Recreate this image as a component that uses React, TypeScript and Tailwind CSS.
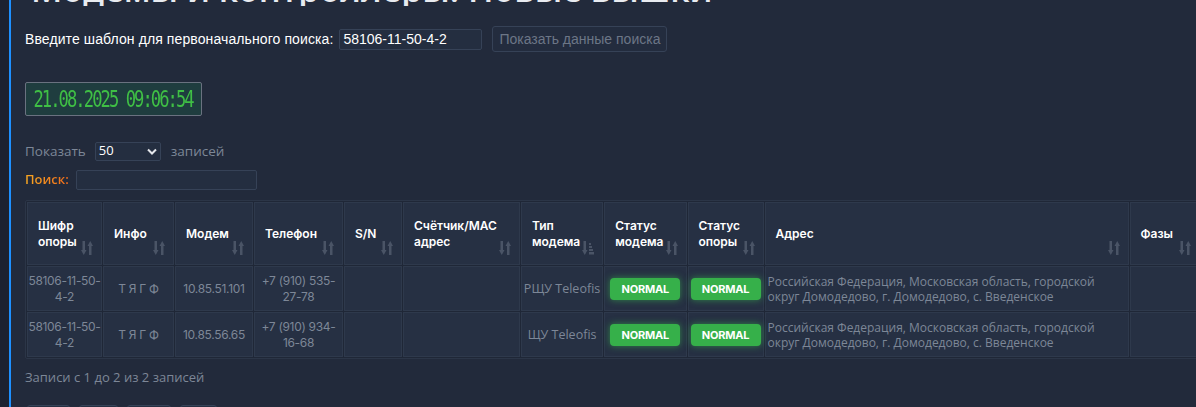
import React from 'react'

const SortIcon = ({active = false}: {active?: boolean}) => (
    <svg width="12" height="14" viewBox="0 0 12 14" className="absolute right-[8px] bottom-[9px]">
        {active ? (
            <g fill="#4a5466">
                <rect x="1.5" y="0" width="2.5" height="10" />
                <path d="M0 9 L2.75 14 L5.5 9 Z" />
                <rect x="7" y="2" width="2" height="2" />
                <rect x="7" y="5" width="3" height="2" />
                <rect x="7" y="8" width="4" height="2" />
                <rect x="7" y="11" width="5" height="2.5" />
            </g>
        ) : (
            <g fill="#4a5466">
                <rect x="1.5" y="0" width="2.5" height="10" />
                <path d="M0 9 L2.75 14 L5.5 9 Z" />
                <rect x="8" y="4" width="2.5" height="10" />
                <path d="M6.5 5 L9.25 0 L12 5 Z" />
            </g>
        )}
    </svg>
)

const headers = [
    {t: 'Шифр опоры', w: 'w-[75px]'},
    {t: 'Инфо', w: 'w-[71px]'},
    {t: 'Модем', w: 'w-[78px]'},
    {t: 'Телефон', w: 'w-[89px]'},
    {t: 'S/N', w: 'w-[58px]'},
    {t: 'Счётчик/MAC адрес', w: 'w-[116px]'},
    {t: 'Тип модема', w: 'w-[82px]', active: true},
    {t: 'Статус модема', w: 'w-[82px]'},
    {t: 'Статус опоры', w: 'w-[76px]'},
    {t: 'Адрес', w: 'w-[364px]'},
    {t: 'Фазы', w: 'w-[70px]'},
]

const rows = [
    {id: '58106-11-50-4-2', modem: '10.85.51.101', phone: '+7 (910) 535-27-78', type: 'РЩУ Teleofis'},
    {id: '58106-11-50-4-2', modem: '10.85.56.65', phone: '+7 (910) 934-16-68', type: 'ЩУ Teleofis'},
]

const addr = 'Российская Федерация, Московская область, городской округ Домодедово, г. Домодедово, с. Введенское'

const Badge = () => (
    <span className="inline-flex items-center justify-center w-[70px] h-[22px] rounded-[4px] bg-[#36b04a] text-white text-[11px] font-bold shadow-[0_0_7px_rgba(60,200,80,0.55)] font-['Inter',sans-serif] tracking-[-0.2px]">
        NORMAL
    </span>
)

const cell = 'border border-[#2e394c] bg-[#263043] p-0 align-middle'

const App = () => {
    return (
        <div className="w-[1196px] h-[407px] overflow-hidden flex bg-[#222a3b] font-['Inter',sans-serif]">
            <div className="w-[9px] shrink-0 bg-[#1c2231]" />
            <div className="w-[2px] shrink-0 bg-[#1e90ff]" />
            <div className="flex-1 min-w-0 pl-[14px] overflow-hidden">
                <div className="h-[6px] flex items-end overflow-hidden">
                    <h1 className="shrink-0 ml-[6px] mb-[-1px] text-[34px] leading-[36px] font-semibold text-[#e8ebf0] whitespace-nowrap font-['Open_Sans',sans-serif]">
                        Модемы и контроллеры: Новые вышки
                    </h1>
                </div>

                <div className="flex items-center mt-[20px] h-[26px]">
                    <span className="text-[14px] text-white font-['Liberation_Sans_Narrow','Liberation_Sans',sans-serif] tracking-[0.1px]">
                        Введите шаблон для первоначального поиска:
                    </span>
                    <div className="ml-[6px] w-[143px] h-[21px] border border-[#364257] bg-[#242e40] rounded-[2px] flex items-center pl-[3px] text-[14px] text-white font-['Liberation_Sans_Narrow','Liberation_Sans',sans-serif]">
                        58106-11-50-4-2
                    </div>
                    <div className="ml-[10px] w-[175px] h-[26px] border border-[#364257] bg-[#232c3e] rounded-[3px] flex items-center justify-center text-[14px] text-[#6c7686] font-['Liberation_Sans_Narrow','Liberation_Sans',sans-serif]">
                        Показать данные поиска
                    </div>
                </div>

                <div className="mt-[30px] w-[177px] h-[34px] border border-[#6a7280] bg-[#1f3d3f] rounded-[2px] flex items-center justify-center">
                    <span className="text-[#3fbf45] text-[22px] font-['DejaVu_Sans_Mono',monospace] tracking-[-2.5px] scale-x-[0.78] scale-y-[1.05] whitespace-nowrap">
                        21.08.2025 09:06:54
                    </span>
                </div>

                <div className="mt-[25px] flex items-center h-[20px] text-[13px] text-[#7d8797] font-['Open_Sans',sans-serif]">
                    <span className="text-[13.5px]">Показать</span>
                    <div className="ml-[9px] w-[66px] h-[19px] border border-[#364257] bg-[#242e40] rounded-[2px] flex items-center justify-between px-[3px] text-white">
                        <span>50</span>
                        <svg width="10" height="7" viewBox="0 0 10 7">
                            <path d="M1 1.5 L5 5.5 L9 1.5" stroke="#e5e7eb" strokeWidth="2" fill="none" />
                        </svg>
                    </div>
                    <span className="ml-[10px] text-[13.5px]">записей</span>
                </div>

                <div className="mt-[8px] flex items-center h-[21px]">
                    <span className="text-[13px] font-semibold bg-gradient-to-r from-[#f5a623] to-[#f06a1a] bg-clip-text text-transparent font-['Open_Sans',sans-serif]">
                        Поиск:
                    </span>
                    <div className="ml-[7px] w-[181px] h-[20px] border border-[#364257] bg-[#242e40] rounded-[2px]" />
                </div>

                <div className="mt-[10px] w-max bg-[#1f2737] border border-[#2b3547] rounded-[2px]">
                    <table className="border-separate border-spacing-[1px] table-fixed">
                        <thead>
                            <tr className="h-[63px]">
                                {headers.map((h) => (
                                    <th key={h.t} className={`${cell} ${h.w} relative text-left pl-[10px] pr-[22px] text-[12px] leading-[16px] font-semibold text-white`}>
                                        {h.t}
                                        <SortIcon active={h.active} />
                                    </th>
                                ))}
                            </tr>
                        </thead>
                        <tbody>
                            {rows.map((r, i) => (
                                <tr key={i} className="h-[45px] text-[12px] leading-[16px] text-[#7d8797] text-center tracking-[-0.3px]">
                                    <td className={cell}>{r.id}</td>
                                    <td className={cell}>Т Я Г Ф</td>
                                    <td className={cell}>{r.modem}</td>
                                    <td className={`${cell} px-[4px]`}>{r.phone}</td>
                                    <td className={cell} />
                                    <td className={cell} />
                                    <td className={`${cell} font-['Open_Sans',sans-serif] text-[12.5px] tracking-normal`}>{r.type}</td>
                                    <td className={cell}><Badge /></td>
                                    <td className={cell}><Badge /></td>
                                    <td className={`${cell} text-left pl-[2px] pr-[8px] font-['Open_Sans',sans-serif] text-[12px] leading-[15px] tracking-normal`}>{addr}</td>
                                    <td className={cell} />
                                </tr>
                            ))}
                        </tbody>
                    </table>
                </div>

                <div className="mt-[9px] text-[13px] text-[#7d8797] font-['Open_Sans',sans-serif]">
                    Записи с 1 до 2 из 2 записей
                </div>

                <div className="mt-[17px] flex gap-[9px] ml-[2px]">
                    <div className="w-[43px] h-[20px] border border-[#364257] bg-[#263043] rounded-[3px]" />
                    <div className="w-[39px] h-[20px] border border-[#364257] bg-[#263043] rounded-[3px]" />
                    <div className="w-[44px] h-[20px] border border-[#364257] bg-[#263043] rounded-[3px]" />
                    <div className="w-[37px] h-[20px] border border-[#364257] bg-[#263043] rounded-[3px]" />
                </div>
            </div>
        </div>
    )
}

export default App
